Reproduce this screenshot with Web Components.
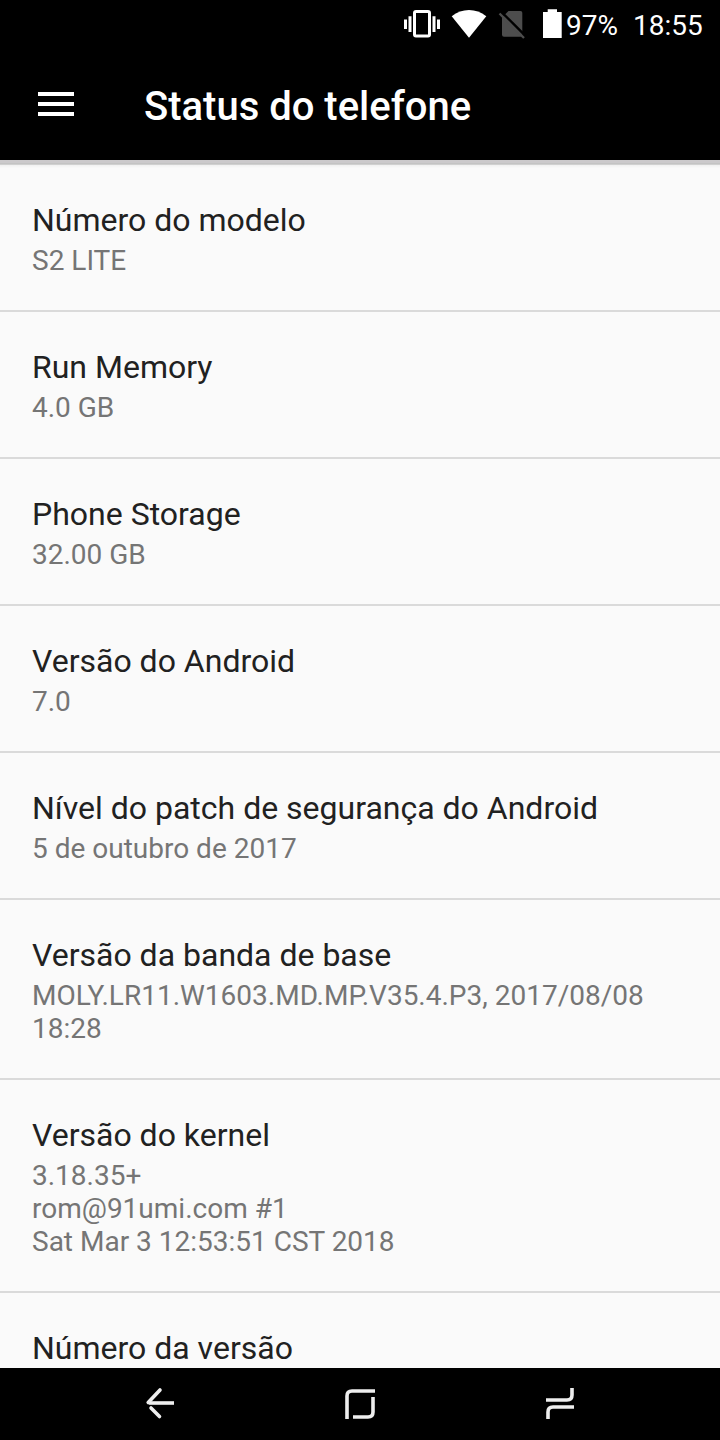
<!DOCTYPE html>
<html lang="pt">
<head>
<meta charset="utf-8">
<meta name="viewport" content="width=device-width">
<title>Status do telefone</title>
<style>
  html, body {
    margin: 0;
    height: 100%;
    overflow: hidden;
    background: #000;
  }
</style>
</head>
<body>
<phone-screen>
  <status-bar slot="top" battery="97%" time="18:55"></status-bar>
  <app-toolbar slot="top">Status do telefone</app-toolbar>
  <info-row label="Número do modelo">S2 LITE</info-row>
  <info-row label="Run Memory">4.0 GB</info-row>
  <info-row label="Phone Storage">32.00 GB</info-row>
  <info-row label="Versão do Android">7.0</info-row>
  <info-row label="Nível do patch de segurança do Android">5 de outubro de 2017</info-row>
  <info-row label="Versão da banda de base">MOLY.LR11.W1603.MD.MP.V35.4.P3, 2017/08/08 18:28</info-row>
  <info-row label="Versão do kernel">3.18.35+<br>rom@91umi.com #1<br>Sat Mar 3 12:53:51 CST 2018</info-row>
  <info-row label="Número da versão"></info-row>
  <nav-bar slot="bottom"></nav-bar>
</phone-screen>

<script>
class PhoneScreen extends HTMLElement {
  constructor() {
    super()
    this.attachShadow({mode: 'open'}).innerHTML = `<style>
          :host {
            display: flex;
            flex-direction: column;
            width: 720px;
            height: 1440px;
            font-family: Roboto, sans-serif;
            background: #fafafa;
          }
          main {
            flex: 1;
            min-height: 0;
            overflow: hidden;
            padding-top: 5px;
          }
        </style>
        <slot name="top"></slot>
        <main><slot></slot></main>
        <slot name="bottom"></slot>`
  }
}

class StatusBar extends HTMLElement {
  constructor() {
    super()
    this.attachShadow({mode: 'open'}).innerHTML = `<style>
          :host {
            display: flex;
            flex: none;
            justify-content: flex-end;
            height: 48px;
            padding-right: 16px;
            box-sizing: border-box;
            background: #000;
            color: #fff;
            font-size: 28px;
            line-height: 52px;
            white-space: nowrap;
          }
          svg { flex: none; margin-right: 3px; }
          #battery { width: 52px; margin-right: 15px; }
          #time { width: 71px; }
        </style>
        <svg width="162" height="48" viewBox="401 0 162 48" fill="#fff">
          <rect x="414.5" y="11.5" width="15" height="24.5" rx="1.5" fill="none" stroke="#fff" stroke-width="3"/>
          <path d="M404 19.5h3v9.5h-3zM408.5 16.3h3v15.7h-3zM432.5 16.3h3v15.7h-3zM437 19.5h3v9.5h-3z"/>
          <path d="M451.7 16.2C462 8 476 8 486.3 16.2L469 37.8z"/>
          <path d="M508.5 11h12q1.8 0 1.8 1.8V35q0 1.8-1.8 1.8H504q-2 0-2-2V17.5z" fill="#4d4d4d"/>
          <path d="M501.2 11.8L526 36.5" stroke="#000" stroke-width="2.5"/>
          <path d="M499.5 13.5L524 38" stroke="#4d4d4d" stroke-width="2.3"/>
          <path d="M547.7 9.3h9.3V12h4.7v26H543V12h4.7z"/>
        </svg>
        <span id="battery"></span><span id="time"></span>`
  }

  connectedCallback() {
    this.shadowRoot.querySelector("#battery").textContent = this.getAttribute("battery")
    this.shadowRoot.querySelector("#time").textContent = this.getAttribute("time")
  }
}

class AppToolbar extends HTMLElement {
  constructor() {
    super()
    this.attachShadow({mode: 'open'}).innerHTML = `<style>
          :host {
            display: flex;
            flex: none;
            position: relative;
            align-items: center;
            height: 112px;
            padding-left: 38px;
            box-sizing: border-box;
            background: #000;
            color: #fff;
          }
          :host::after {
            content: "";
            position: absolute;
            top: 100%;
            left: 0;
            right: 0;
            height: 8px;
            background: linear-gradient(#cbc9cb 0 3px, #c3c3c3 3px 4px, #d0d0d0 4px 5px, #f0f0f0 5px, #fafafa);
          }
          h1 {
            margin: 6px 0 0 70px;
            font-size: 40px;
            font-weight: 500;
            line-height: 48px;
          }
        </style>
        <svg width="36" height="24" viewBox="0 0 36 24" fill="#fff"><path d="M0 0h36v4H0zM0 10h36v4H0zM0 20h36v4H0z"/></svg>
        <h1><slot></slot></h1>`
  }
}

class InfoRow extends HTMLElement {
  constructor() {
    super()
    this.attachShadow({mode: 'open'}).innerHTML = `<style>
          :host {
            display: block;
            padding: 36px 32px 33px;
            border-bottom: 2px solid #dadada;
          }
          #label {
            margin-bottom: 5px;
            font-size: 32px;
            line-height: 38px;
            color: #212121;
          }
          #value {
            font-size: 28px;
            line-height: 33px;
            color: #757575;
          }
        </style>
        <div id="label"></div>
        <div id="value"><slot></slot></div>`
  }

  connectedCallback() {
    this.shadowRoot.querySelector("#label").textContent = this.getAttribute("label")
  }
}

class NavBar extends HTMLElement {
  constructor() {
    super()
    this.attachShadow({mode: 'open'}).innerHTML = `<style>
          :host {
            display: flex;
            flex: none;
            justify-content: center;
            gap: 120px;
            height: 72px;
            background: #000;
          }
          svg {
            width: 80px;
            height: 72px;
            fill: none;
            stroke: #eee;
            stroke-width: 3.6;
          }
        </style>
        <svg viewBox="0 0 80 72"><path d="M54 35H29"/><path d="M40 22L28.2 34.5M31 40L39.5 48.5" stroke-linecap="round"/></svg>
        <svg viewBox="0 0 80 72"><path d="M27 51V28q0-5 5-5H55M53 29V44q0 5-5 5H33"/></svg>
        <svg viewBox="0 0 80 72"><path d="M52 20V27q0 5-5 5H26M28 51V44q0-5 5-5H54"/></svg>`
  }
}

customElements.define('phone-screen', PhoneScreen);
customElements.define('status-bar', StatusBar);
customElements.define('app-toolbar', AppToolbar);
customElements.define('info-row', InfoRow);
customElements.define('nav-bar', NavBar);
</script>
</body>
</html>
